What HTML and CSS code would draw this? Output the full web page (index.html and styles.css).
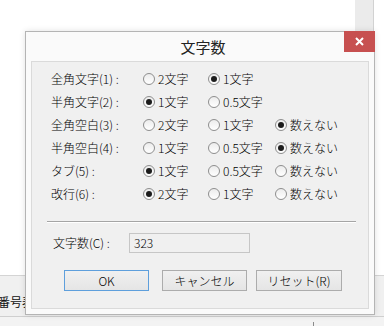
FILE: index.html
```html
<!DOCTYPE html>
<html lang="ja">
<head>
    <meta charset="UTF-8">
    <title>文字数</title>
    <link rel="stylesheet" href="styles.css">
</head>
<body>
    <div class="desktop">
        <div class="app">
            <div class="app-body">
                <div class="doc"></div>
                <div class="scroll"></div>
                <div class="side"></div>
            </div>
            <div class="tabs"><span class="tab">番号表</span></div>
            <div class="status"><span class="status-sep"></span></div>
        </div>

        <div class="dialog">
            <div class="titlebar">
                <span></span>
                <span class="title">文字数</span>
                <button class="close" aria-label="閉じる">
                    <svg width="9" height="9" viewBox="0 0 9 9"><path d="M1 1 L8 8 M8 1 L1 8" stroke="#fff" stroke-width="2"/></svg>
                </button>
            </div>
            <div class="panel">
                <div class="options">
                    <span class="label">全角文字(1) :</span>
                    <span class="opt"><i class="radio"></i>2文字</span>
                    <span class="opt"><i class="radio on"></i>1文字</span>
                    <span></span>

                    <span class="label">半角文字(2) :</span>
                    <span class="opt"><i class="radio on"></i>1文字</span>
                    <span class="opt"><i class="radio"></i>0.5文字</span>
                    <span></span>

                    <span class="label">全角空白(3) :</span>
                    <span class="opt"><i class="radio"></i>2文字</span>
                    <span class="opt"><i class="radio"></i>1文字</span>
                    <span class="opt"><i class="radio on"></i>数えない</span>

                    <span class="label">半角空白(4) :</span>
                    <span class="opt"><i class="radio"></i>1文字</span>
                    <span class="opt"><i class="radio"></i>0.5文字</span>
                    <span class="opt"><i class="radio on"></i>数えない</span>

                    <span class="label">タブ(5) :</span>
                    <span class="opt"><i class="radio on"></i>1文字</span>
                    <span class="opt"><i class="radio"></i>0.5文字</span>
                    <span class="opt"><i class="radio"></i>数えない</span>

                    <span class="label">改行(6) :</span>
                    <span class="opt"><i class="radio on"></i>2文字</span>
                    <span class="opt"><i class="radio"></i>1文字</span>
                    <span class="opt"><i class="radio"></i>数えない</span>
                </div>

                <div class="separator"></div>

                <div class="count-row">
                    <span class="count-label">文字数(C) :</span>
                    <span class="count-box">323</span>
                </div>

                <div class="buttons">
                    <button class="btn btn-default">OK</button>
                    <button class="btn btn-cancel">キャンセル</button>
                    <button class="btn btn-reset">リセット(R)</button>
                </div>
            </div>
        </div>
    </div>
</body>
</html>
```

FILE: styles.css
```css
body {
    margin: 0;
    font-family: "Noto Sans CJK JP", "Noto Sans", sans-serif;
    font-weight: 300;
    color: #000;
    background: #fff;
}
.desktop {
    position: relative;
    width: 384px;
    height: 326px;
    overflow: hidden;
}

/* background application window */
.app {
    display: flex;
    flex-direction: column;
    height: 326px;
}
.app-body {
    display: flex;
    height: 275px;
}
.doc {
    flex: 1;
    background: #fff;
}
.scroll {
    width: 18px;
    background: #ebebeb;
    border-right: 1px solid #d2d2d2;
}
.side {
    width: 10px;
    background: #fff;
}
.tabs {
    height: 40px;
    border-top: 1px solid #d4d4d4;
    background: #f0f0f0;
    display: flex;
    align-items: flex-end;
}
.tab {
    font-size: 12px;
    font-weight: 400;
    line-height: 16px;
    margin: 0 0 6px -2px;
    color: #111;
}
.status {
    flex: 1;
    border-top: 1px solid #cfcfcf;
    background: #f3f3f3;
    display: flex;
    align-items: flex-end;
}
.status-sep {
    width: 1px;
    height: 4px;
    margin-left: 313px;
    background: #8a8a8a;
}

/* dialog */
.dialog {
    position: absolute;
    left: 25px;
    top: 31px;
    width: 350px;
    height: 284px;
    box-sizing: border-box;
    border: 1px solid #b4b4b4;
    background: #fafafa;
    box-shadow: 0 0 6px rgba(0, 0, 0, 0.12);
    display: flex;
    flex-direction: column;
    padding: 0 5px 5px;
}
.titlebar {
    display: grid;
    grid-template-columns: 1fr auto 1fr;
    height: 29px;
    margin: 0 -5px;
}
.title {
    font-size: 15px;
    font-weight: 400;
    line-height: 29px;
    padding-left: 6px;
    color: #222;
}
.close {
    justify-self: end;
    align-self: start;
    width: 31px;
    height: 21px;
    margin: -1px -1px 0 0;
    border: none;
    padding: 0;
    background: #c75050;
    display: flex;
    align-items: center;
    justify-content: center;
}
.panel {
    flex: 1;
    border: 1px solid #dadada;
    background: #f0f0f0;
    padding-top: 5px;
    font-size: 12px;
}
.options {
    display: grid;
    grid-template-columns: 92px 65px 67px auto;
    grid-auto-rows: 23px;
    align-items: center;
    padding-left: 19px;
}
.label, .opt {
    line-height: 16px;
    white-space: nowrap;
}
.opt {
    display: flex;
    align-items: center;
    gap: 3px;
}
.radio {
    box-sizing: border-box;
    width: 12px;
    height: 12px;
    border-radius: 50%;
    border: 1px solid #8e8e8e;
    background: linear-gradient(#ececec, #fff);
    display: grid;
    place-items: center;
}
.radio.on::after {
    content: "";
    width: 6px;
    height: 6px;
    border-radius: 50%;
    background: #1c1c1c;
}
.separator {
    margin: 16px 12px 0 15px;
    border-top: 1px solid #a5a5a5;
    border-bottom: 1px solid #fff;
}
.count-row {
    display: flex;
    align-items: center;
    margin-top: 10px;
    padding-left: 21px;
}
.count-label {
    width: 76px;
    line-height: 16px;
}
.count-box {
    box-sizing: border-box;
    width: 121px;
    height: 20px;
    border: 1px solid #c6c6c6;
    background: #f0f0f0;
    padding-left: 4px;
    line-height: 18px;
}
.buttons {
    display: flex;
    margin-top: 17px;
    padding-left: 32px;
}
.btn {
    box-sizing: border-box;
    width: 85px;
    height: 21px;
    border: 1px solid #acacac;
    background: linear-gradient(#f0f0f0, #e5e5e5);
    font-family: inherit;
    font-weight: 300;
    font-size: 12px;
    color: #000;
    padding: 0;
    line-height: 19px;
}
.btn-default {
    border-color: #5e9fdc;
}
.btn-cancel {
    margin-left: 13px;
}
.btn-reset {
    margin-left: 9px;
    width: 86px;
}
```
